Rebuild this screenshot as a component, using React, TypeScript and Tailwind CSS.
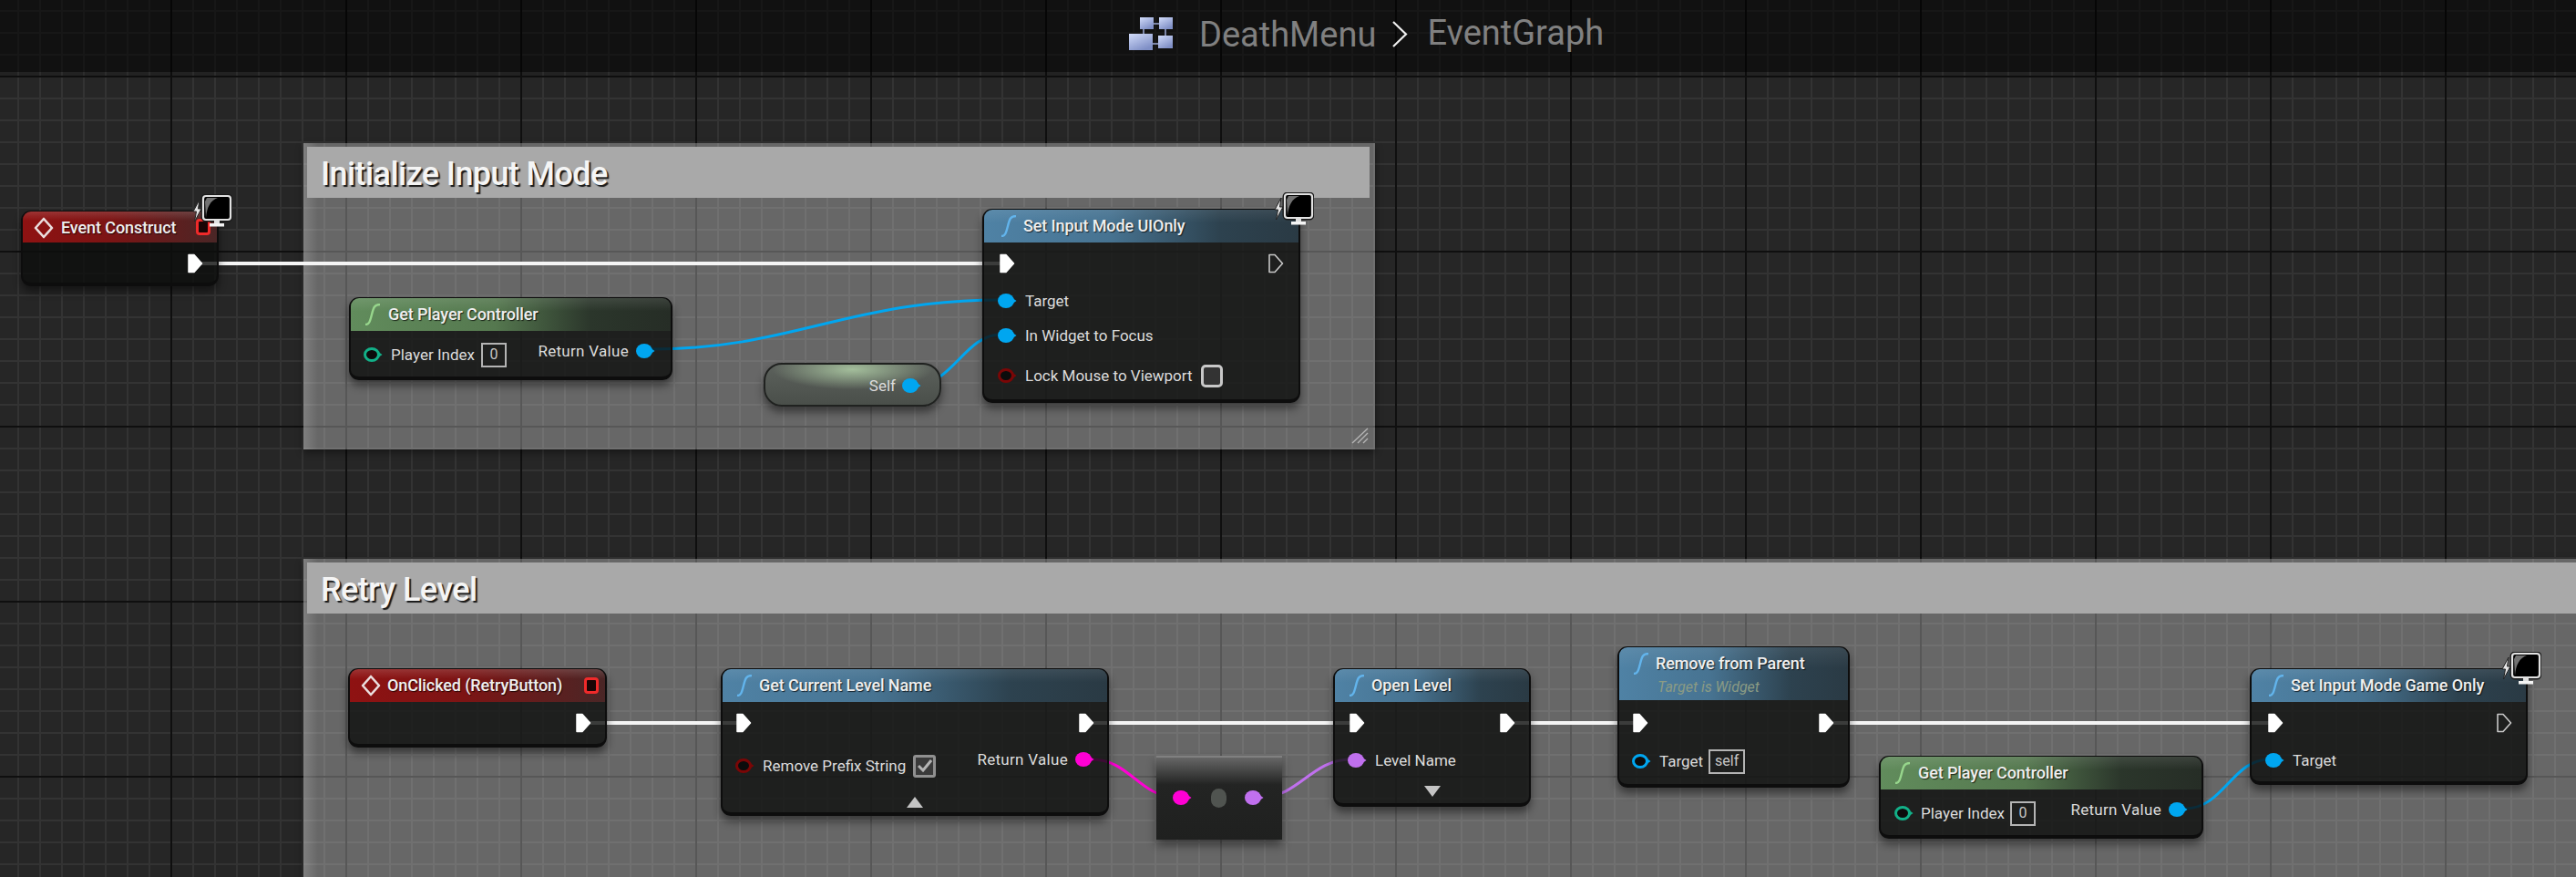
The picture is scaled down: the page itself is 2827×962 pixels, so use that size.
import type { ReactNode } from "react";

type Kind = "red" | "blue" | "green";

const titleBg: Record<Kind, string> = {
  red: "bg-[linear-gradient(to_bottom,rgba(255,255,255,0.14),transparent_30%),linear-gradient(to_right,#8f1212,#7c1414_45%,#4a2626)]",
  blue: "bg-[linear-gradient(to_bottom,rgba(255,255,255,0.08),transparent_40%),linear-gradient(to_right,#4f82a5,#477391_40%,#2d424f_75%,#2a3a44)]",
  green: "bg-[linear-gradient(to_bottom,rgba(255,255,255,0.1),transparent_40%),linear-gradient(to_right,#618c5c,#55784f_45%,#2b362b_75%,#262d26)]",
};

function FnIcon({ color }: { color: string }) {
  return (
    <svg width="20" height="24" viewBox="0 0 20 24" fill="none" className="shrink-0">
      <path d="M2 23 C6 23 7 20 9 12 C11 4 12 1 18 1" stroke={color} strokeWidth="2.4" />
    </svg>
  );
}

function EventIcon() {
  return (
    <svg width="22" height="24" viewBox="0 0 22 24" fill="none" className="shrink-0">
      <path d="M11 2 L20 12 L11 22 L2 12 Z" stroke="#eadede" strokeWidth="2.6" strokeLinejoin="round" />
    </svg>
  );
}

function DelegateBox() {
  return <div className="h-[18px] w-[16px] rounded-[4px] border-[3px] border-[#f02a2a] bg-[#1a0505]" />;
}

function MonitorIcon() {
  return (
    <svg width="44" height="38" viewBox="0 0 44 38" fill="none" className="absolute right-[-17px] top-[-20px]">
      <path d="M8 6 L1 19 L4.5 19 L2.5 30 L10 16 L6.5 16 Z" fill="#e4e4e4" stroke="#222" strokeWidth="1" />
      <rect x="12" y="2" width="30" height="26" rx="3" fill="#000" stroke="#1a1a1a" strokeWidth="5" />
      <rect x="12" y="2" width="30" height="26" rx="3" fill="#000" stroke="#e2e2e2" strokeWidth="2.2" />
      <path d="M15 26 C16 14 20 7 28 4 L16 4 L14 8 Z" fill="#727272" />
      <rect x="24" y="28" width="6" height="4" fill="#e0e0e0" />
      <rect x="19" y="32" width="16" height="3.5" fill="#f4f4f4" />
    </svg>
  );
}

function Exec({ hollow }: { hollow?: boolean }) {
  return (
    <svg width="18" height="22" viewBox="0 0 18 22" className="shrink-0">
      <path
        d="M2 1.5 H8 L16.5 11 L8 20.5 H2 Z"
        fill={hollow ? "none" : "#fff"}
        stroke={hollow ? "#c8c8c8" : "#fff"}
        strokeWidth={hollow ? 1.6 : 1.5}
        strokeLinejoin="round"
      />
    </svg>
  );
}

function Pin({ color, ring }: { color: string; ring?: boolean }) {
  return (
    <svg width="21" height="16" viewBox="0 0 21 16" className="shrink-0">
      <path d="M17 5.5 L20.5 8 L17 10.5 Z" fill={color} />
      {ring ? (
        <ellipse cx="9" cy="8" rx="7.5" ry="6.5" fill="#0c0c0c" stroke={color} strokeWidth="3" />
      ) : (
        <ellipse cx="9" cy="8" rx="9" ry="8" fill={color} />
      )}
    </svg>
  );
}

function Label({ children, wide }: { children: ReactNode; wide?: boolean }) {
  return (
    <span className={`whitespace-nowrap text-[17px] leading-none text-[#dcdcdc] ${wide ? "tracking-[0.3px]" : ""}`}>{children}</span>
  );
}

function ValueBox({ children, className }: { children: string; className: string }) {
  return (
    <div className={`flex h-[27px] items-center justify-center border-2 border-[#b4b4b4] text-[16px] text-[#c8c8c8] ${className}`}>
      {children}
    </div>
  );
}

function Triangle({ down }: { down?: boolean }) {
  return (
    <svg width="18" height="12" viewBox="0 0 18 12">
      <path d={down ? "M0 0 H18 L9 12 Z" : "M9 0 L18 12 H0 Z"} fill="#c4c4c4" />
    </svg>
  );
}

function Node({
  kind,
  title,
  sub,
  className,
  titleClass = "h-[36px]",
  titlePad = "pl-[17px] gap-[6px]",
  extra,
  monitor,
  children,
}: {
  kind: Kind;
  title: string;
  sub?: string;
  className: string;
  titleClass?: string;
  titlePad?: string;
  extra?: ReactNode;
  monitor?: boolean;
  children: ReactNode;
}) {
  const iconColor = kind === "green" ? "#97d68c" : "#62b4ec";
  return (
    <div
      className={`absolute rounded-[11px] border-x-[2px] border-t-[2px] border-b-[4px] border-[#0d0d0d] bg-[#0d0e0c]/80 shadow-[0_6px_10px_rgba(0,0,0,0.45)] ${className}`}
    >
      <div className={`-mt-[1px] flex items-start rounded-t-[9px] ${titleBg[kind]} ${titleClass} ${titlePad}`}>
        <div className="flex h-[36px] items-center">{kind === "red" ? <EventIcon /> : <FnIcon color={iconColor} />}</div>
        <div className="flex min-w-0 flex-1 flex-col pt-[8px]">
          <span className="whitespace-nowrap text-[18px] font-medium leading-[20px] tracking-[-0.1px] text-[#efefef] [text-shadow:1px_1px_1px_rgba(0,0,0,0.7)]">{title}</span>
          {sub && <span className="mt-[7px] whitespace-nowrap pl-[2px] text-[16px] italic leading-[18px] text-[#8b9b84]">{sub}</span>}
        </div>
        {extra}
      </div>
      {children}
      {monitor && <MonitorIcon />}
    </div>
  );
}

function Comment({ title, className, children }: { title: string; className: string; children?: ReactNode }) {
  return (
    <div className={`absolute bg-white/30 pl-[4px] pr-[6px] pt-[4px] shadow-[0_3px_8px_rgba(0,0,0,0.45)] ${className}`}>
      <div className="absolute inset-y-0 left-0 w-[16px] bg-[linear-gradient(to_right,rgba(255,255,255,0.16),transparent)]" />
      <div className="relative flex h-[56px] items-center bg-[#a9a9a9] pl-[15px] pt-[3px] text-[36px] font-medium leading-none tracking-[-0.6px] text-[#f5f5f5] [text-shadow:2px_2px_1px_rgba(0,0,0,0.85)]">
        {title}
      </div>
      {children}
    </div>
  );
}

function Wires() {
  return (
    <svg width="2827" height="962" viewBox="0 0 2827 962" fill="none" className="absolute inset-0">
      <g stroke="#f4f4f4" strokeWidth="4">
        <path d="M220 289 H1098" />
        <path d="M646 793 H810" />
        <path d="M1198 793 H1482" />
        <path d="M1660 793 H1794" />
        <path d="M2010 793 H2490" />
      </g>
      <g stroke="#00a6f0" strokeWidth="3">
        <path d="M715 383 C870 383 930 329 1098 329" />
        <path d="M1008 421 C1045 421 1060 367 1098 367" />
        <path d="M2398 887 C2440 887 2450 833 2490 833" />
      </g>
      <path d="M1198 833 C1240 833 1250 874 1290 874" stroke="#ff00d4" strokeWidth="3" />
      <path d="M1386 874 C1425 874 1440 833 1482 833" stroke="#c070ee" strokeWidth="3" />
    </svg>
  );
}

export default function App() {
  return (
    <div className="relative h-[962px] w-[2827px] overflow-hidden bg-[#262626] bg-[linear-gradient(to_right,#0f0f0f_2px,transparent_2px),linear-gradient(to_bottom,#0f0f0f_2px,transparent_2px),linear-gradient(to_right,#333333_2px,transparent_2px),linear-gradient(to_bottom,#333333_2px,transparent_2px)] bg-size-[192px_192px,192px_192px,24px_24px,24px_24px] bg-position-[187px_83px,187px_83px,19px_11px,19px_11px] font-['Roboto',sans-serif]">
      <Comment title="Initialize Input Mode" className="left-[333px] top-[157px] h-[336px] w-[1176px]">
        <svg width="20" height="18" viewBox="0 0 20 18" className="absolute bottom-[6px] right-[6px]" stroke="#b4b4b4" strokeWidth="1.4">
          <path d="M1 17 L18 1 M7 17 L18 6 M13 17 L18 12" />
        </svg>
      </Comment>
      <Comment title="Retry Level" className="left-[333px] top-[613px] h-[400px] w-[2560px]" />

      <Wires />

      {/* top graph */}
      <Node
        kind="red"
        title="Event Construct"
        className="left-[23px] top-[231px] w-[217px]"
        titleClass="h-[34px]"
        titlePad="pl-[12px] gap-[8px]"
        monitor
        extra={
          <div className="flex h-[34px] items-center pr-[7px]">
            <DelegateBox />
          </div>
        }
      >
        <div className="flex h-[44px] items-center justify-end pr-[15px] pt-[2px]">
          <Exec />
        </div>
      </Node>

      <Node kind="green" title="Get Player Controller" className="left-[383px] top-[326px] w-[355px]" titlePad="pl-[14px] gap-[7px]">
        <div className="flex h-[50px] items-center justify-between pl-[14px] pr-[17px]">
          <div className="flex items-center gap-[9px] pt-[2px]">
            <Pin color="#12b088" ring />
            <Label>Player Index</Label>
            <ValueBox className="ml-[-2px] w-[28px]">0</ValueBox>
          </div>
          <div className="flex items-center gap-[8px] pb-[6px]">
            <Label wide>Return Value</Label>
            <Pin color="#00a6f0" />
          </div>
        </div>
      </Node>

      <div className="absolute left-[838px] top-[398px] flex h-[48px] w-[195px] items-center justify-end gap-[7px] rounded-[20px] border-2 border-[#202220] bg-[radial-gradient(ellipse_46%_50%_at_50%_12%,#a3be9b,transparent),linear-gradient(to_bottom,#5c615c,#4a4f4a)] pr-[20px] pt-[2px] shadow-[0_6px_10px_rgba(0,0,0,0.45)]">
        <Label>Self</Label>
        <Pin color="#00a6f0" />
      </div>

      <Node kind="blue" title="Set Input Mode UIOnly" className="left-[1078px] top-[229px] w-[349px]" monitor>
        <div className="flex h-[48px] items-center justify-between pb-[2px] pl-[16px] pr-[16px]">
          <Exec />
          <Exec hollow />
        </div>
        <div className="flex h-[32px] items-center gap-[9px] pl-[15px]">
          <Pin color="#00a6f0" />
          <Label>Target</Label>
        </div>
        <div className="flex h-[44px] items-center gap-[9px] pl-[15px]">
          <Pin color="#00a6f0" />
          <Label>In Widget to Focus</Label>
        </div>
        <div className="flex h-[44px] items-center gap-[9px] pl-[15px]">
          <Pin color="#7a0606" ring />
          <Label>Lock Mouse to Viewport</Label>
          <div className="h-[25px] w-[24px] rounded-[5px] border-[3px] border-[#c8c8c8] bg-[#333333]" />
        </div>
        <div className="h-[4px]" />
      </Node>

      {/* bottom graph */}
      <Node
        kind="red"
        title="OnClicked (RetryButton)"
        className="left-[382px] top-[733px] w-[284px]"
        titlePad="pl-[12px] gap-[7px]"
        extra={
          <div className="flex h-[36px] items-center pr-[7px]">
            <DelegateBox />
          </div>
        }
      >
        <div className="flex h-[46px] items-center justify-end pr-[15px]">
          <Exec />
        </div>
      </Node>

      <Node kind="blue" title="Get Current Level Name" className="left-[791px] top-[733px] w-[426px]" titlePad="pl-[14px] gap-[6px]">
        <div className="flex h-[48px] items-center justify-between pb-[2px] pl-[14px] pr-[14px]">
          <Exec />
          <Exec />
        </div>
        <div className="flex h-[40px] items-center justify-between pl-[14px] pr-[14px]">
          <div className="flex items-center gap-[9px] pt-[4px]">
            <Pin color="#7a0606" ring />
            <Label>Remove Prefix String</Label>
            <div className="ml-[-1px] flex h-[25px] w-[25px] items-center justify-center rounded-[3px] border-[3px] border-[#909090] bg-[#3a3a3a]">
              <svg width="16" height="14" viewBox="0 0 16 14" fill="none">
                <path d="M1 7 L6 12 L15 1" stroke="#b4b4b4" strokeWidth="3" />
              </svg>
            </div>
          </div>
          <div className="flex items-center gap-[8px] pb-[10px]">
            <Label wide>Return Value</Label>
            <Pin color="#ff00d4" />
          </div>
        </div>
        <div className="flex justify-center pb-[5px] pt-[16px]">
          <Triangle />
        </div>
      </Node>

      <div className="absolute left-[1269px] top-[829px] flex h-[92px] w-[138px] items-center border-t-2 border-[#808080] bg-[linear-gradient(to_bottom,#666666,#232423_33%,#1f201f)] pb-[2px] pl-[18px] shadow-[0_6px_10px_rgba(0,0,0,0.45)]">
        <Pin color="#ff00d4" />
        <div className="ml-[21px] h-[21px] w-[17px] rounded-full bg-[#505450]" />
        <div className="ml-[20px]">
          <Pin color="#c070ee" />
        </div>
      </div>

      <Node kind="blue" title="Open Level" className="left-[1463px] top-[733px] w-[217px]" titlePad="pl-[14px] gap-[6px]">
        <div className="flex h-[48px] items-center justify-between pb-[2px] pl-[15px] pr-[15px]">
          <Exec />
          <Exec />
        </div>
        <div className="flex h-[32px] items-center gap-[9px] pl-[14px]">
          <Pin color="#c070ee" />
          <Label>Level Name</Label>
        </div>
        <div className="flex justify-center pb-[7px] pt-[12px]">
          <Triangle down />
        </div>
      </Node>

      <Node kind="blue" title="Remove from Parent" sub="Target is Widget" className="left-[1775px] top-[709px] w-[255px]" titleClass="h-[58px]" titlePad="pl-[14px] gap-[6px]">
        <div className="flex h-[50px] items-center justify-between pl-[14px] pr-[15px]">
          <Exec />
          <Exec />
        </div>
        <div className="flex h-[34px] items-center gap-[9px] pl-[14px]">
          <Pin color="#00a6f0" ring />
          <Label>Target</Label>
          <ValueBox className="ml-[-3px] w-[40px]">self</ValueBox>
        </div>
        <div className="h-[8px]" />
      </Node>

      <Node kind="green" title="Get Player Controller" className="left-[2062px] top-[829px] w-[356px]" titlePad="pl-[14px] gap-[7px]">
        <div className="flex h-[50px] items-center justify-between pl-[15px] pr-[15px]">
          <div className="flex items-center gap-[8px] pt-[2px]">
            <Pin color="#12b088" ring />
            <Label>Player Index</Label>
            <ValueBox className="ml-[-2px] w-[28px]">0</ValueBox>
          </div>
          <div className="flex items-center gap-[8px] pb-[6px]">
            <Label wide>Return Value</Label>
            <Pin color="#00a6f0" />
          </div>
        </div>
      </Node>

      <Node kind="blue" title="Set Input Mode Game Only" className="left-[2469px] top-[733px] w-[305px]" monitor>
        <div className="flex h-[48px] items-center justify-between pb-[2px] pl-[17px] pr-[15px]">
          <Exec />
          <Exec hollow />
        </div>
        <div className="flex h-[32px] items-center gap-[9px] pl-[15px]">
          <Pin color="#00a6f0" />
          <Label>Target</Label>
        </div>
        <div className="h-[7px]" />
      </Node>

      {/* breadcrumb bar */}
      <header className="absolute inset-x-0 top-0 flex h-[79px] items-center bg-black/55 pb-[4px] pl-[1239px] text-[38px] leading-none text-[#808080]">
        <svg width="48" height="37" viewBox="0 0 48 37" className="mr-[29px] shrink-0">
          <defs>
            <linearGradient id="tile" x1="0" y1="0" x2="0.6" y2="1">
              <stop offset="0" stopColor="#d2dcfa" />
              <stop offset="1" stopColor="#7f8fc6" />
            </linearGradient>
          </defs>
          <path d="M20 7 H36 M40 12 V24 M26 29 H36 M16 12 V20" stroke="#7c86a8" strokeWidth="2" />
          <rect x="12" y="0" width="15" height="13" fill="url(#tile)" />
          <rect x="33" y="0" width="15" height="13" fill="url(#tile)" />
          <rect x="0" y="18" width="26" height="18" fill="url(#tile)" />
          <rect x="32" y="20" width="16" height="14" fill="url(#tile)" />
        </svg>
        <span>DeathMenu</span>
        <svg width="17" height="29" viewBox="0 0 17 29" fill="none" className="ml-[18px] mr-[21px] shrink-0">
          <path d="M1 1 L15 14.5 L1 28" stroke="#f0f0f0" strokeWidth="2.2" />
        </svg>
        <span className="pb-[3px]">EventGraph</span>
      </header>
      <div className="absolute inset-x-0 top-[79px] h-[5px] bg-black/10" />
    </div>
  );
}
